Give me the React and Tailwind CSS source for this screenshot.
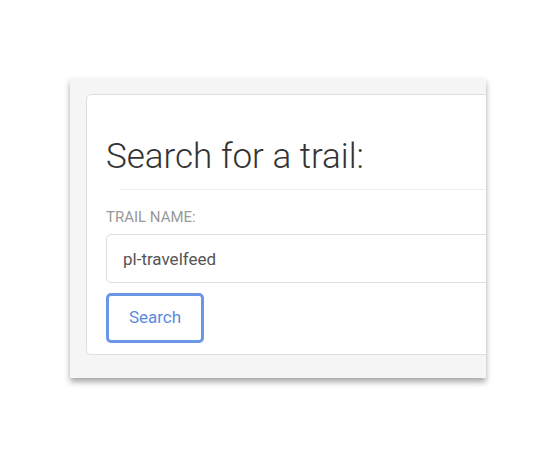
import React from 'react';

const App = () => {
    return (
        <div className="w-[557px] h-[456px] bg-white pt-[78px] pl-[70px]" style={{ fontFamily: 'Roboto, "Liberation Sans", sans-serif' }}>
            {/* outer grey panel */}
            <div className="w-[416px] h-[300px] bg-[#f5f5f5] pt-[16px] pl-[16px] overflow-hidden shadow-[0_4px_6px_rgba(0,0,0,0.35)]">
                <div className="w-[460px] bg-white border border-[#dedede] rounded-[5px] pl-[19px] pt-[42px] pb-[11px]">
                    <h1 className="text-[35px] leading-[40px] font-light text-[#333]">
                        Search for a trail:
                    </h1>
                    <hr className="mt-[12px] ml-[14px] border-0 border-t border-[#eee]" />
                    <label className="block mt-[17px] text-[15px] leading-[20px] uppercase text-[#999]">
                        Trail name:
                    </label>
                    <input
                        className="mt-[7px] block w-[420px] h-[49px] border border-[#dedede] rounded-[5px] pl-[16px] text-[17px] text-[#555] outline-none"
                        defaultValue="pl-travelfeed"
                        readOnly
                    />
                    <button className="mt-[10px] w-[98px] h-[50px] border-[3px] border-[#6b96e8] rounded-[5px] text-[17px] text-[#5b8be0] bg-white">
                        Search
                    </button>
                </div>
            </div>
        </div>
    );
};

export default App;
